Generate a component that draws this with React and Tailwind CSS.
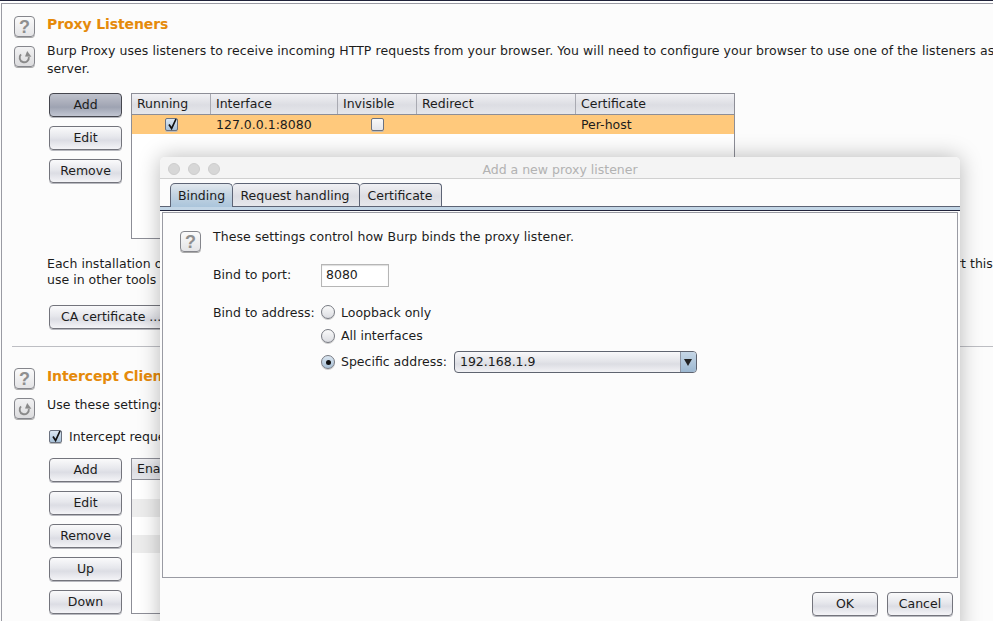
function Btn({ children, active, className = "" }) {
  return (
    <div
      className={
        "flex h-[24px] items-center justify-center rounded-[4px] border text-[12.5px] text-[#1c1c1c] shadow-[0_1px_0_#b8b9bf] " +
        (active
          ? "border-[#45464e] bg-[linear-gradient(#bfc2cc,#a4a8b6_50%,#9ea3b2_60%,#c2c6d2)] "
          : "border-[#73747c] bg-[linear-gradient(#fafafb,#e6e7ec_45%,#dcdde4_60%,#f4f4f7)] ") +
        className
      }
    >
      {children}
    </div>
  );
}

function Help() {
  return (
    <div className="flex h-[21px] w-[21px] shrink-0 items-center justify-center rounded-[4px] border border-[#85868c] bg-[linear-gradient(#fbfbfb,#e4e4e6)] font-['Liberation_Sans',sans-serif] text-[18px] leading-none font-bold text-[#8f8f8f] shadow-[0_1px_0_#aaa]">
      ?
    </div>
  );
}

function Refresh() {
  return (
    <div className="flex h-[21px] w-[21px] items-center justify-center rounded-[4px] border border-[#85868c] bg-[linear-gradient(#f2f2f3,#dcdcde)] shadow-[0_1px_0_#aaa]">
      <svg width="14" height="14" viewBox="0 0 14 14" fill="none" stroke="#8a8a8a" strokeWidth="1.9">
        <path d="M3 4.4 A4.6 4.6 0 1 0 10.8 7" />
        <path d="M7 6.6 L9.2 1 L13.4 6.8 Z" fill="#8a8a8a" stroke="none" />
      </svg>
    </div>
  );
}

function Check({ on }) {
  return (
    <div
      className={
        "relative h-[13px] w-[13px] shrink-0 rounded-[2px] border border-[#6b7280] shadow-[0_1px_0_#bbb] " +
        (on ? "bg-[linear-gradient(#dbe7f2,#a9c2d9)]" : "bg-[linear-gradient(#f8f8f8,#e4e5ea)]")
      }
    >
      {on && (
        <svg className="absolute -top-[2px] left-[1px]" width="11" height="14" viewBox="0 0 11 14" fill="none" stroke="#111" strokeWidth="1.7">
          <path d="M2 7.5 L4.6 11.5 L9 2" />
        </svg>
      )}
    </div>
  );
}

function Radio({ on }) {
  return (
    <div
      className={
        "flex h-[14px] w-[14px] shrink-0 items-center justify-center rounded-full border border-[#777a82] shadow-[0_1px_0_#ccc] " +
        (on ? "bg-[linear-gradient(#dbe6f0,#a8c0d6)]" : "bg-[linear-gradient(#fafafa,#dcdde2)]")
      }
    >
      {on && <div className="h-[5px] w-[5px] rounded-full bg-[#111]" />}
    </div>
  );
}

const columns = [
  ["Running", "w-[79px]"],
  ["Interface", "w-[127px]"],
  ["Invisible", "w-[79px]"],
  ["Redirect", "w-[159px]"],
  ["Certificate", "flex-1"],
];

const headBg = "bg-[linear-gradient(#f1f1f4,#dcdde3_55%,#e6e7eb)]";
const titleCls = "-mt-[1px] text-[14px] leading-[18px] font-bold tracking-[-0.1px] text-[#e58a0b]";

export default function App() {
  return (
    <div className="relative h-[621px] w-[993px] overflow-hidden bg-[#fcfcfc] font-['DejaVu_Sans',sans-serif] text-[12.5px] leading-[18px] text-[#1c1c1c]">
      <div className="h-[1px] bg-[#20233a]" />
      <div className="h-[2px] bg-white" />
      <div className="ml-[1px] h-[618px] border-t border-l border-[#9a9ba3] pl-[10px]">
        {/* Proxy Listeners */}
        <section className="flex h-[343px] flex-col border-b border-[#bdbec3] pl-[2px]">
          <div className="flex pt-[12px]">
            <div className="flex w-[33px] shrink-0 flex-col gap-[9px]">
              <Help />
              <Refresh />
            </div>
            <div className="min-w-0">
              <h2 className={titleCls}>Proxy Listeners</h2>
              <p className="mt-[9px] tracking-[0.065px] whitespace-nowrap">
                Burp Proxy uses listeners to receive incoming HTTP requests from your browser. You will need to configure your browser to use one of the listeners as
                <br />
                server.
              </p>
            </div>
          </div>
          <div className="mt-[15px] flex pl-[35px]">
            <div className="flex w-[82px] shrink-0 flex-col gap-[9px]">
              <Btn active className="w-[73px]">Add</Btn>
              <Btn className="w-[73px]">Edit</Btn>
              <Btn className="w-[73px]">Remove</Btn>
            </div>
            <div className="h-[146px] w-[604px] border border-[#8d8e97] bg-white">
              <div className={"flex h-[21px] border-b border-[#8d8e97] " + headBg}>
                {columns.map(([c, w]) => (
                  <div key={c} className={"flex h-full items-center border-r border-[#a9aab2] pl-[5px] last:border-r-0 " + w}>
                    {c}
                  </div>
                ))}
              </div>
              <div className="flex h-[19px] items-center bg-[#ffc97c]">
                <div className="flex w-[79px] justify-center"><Check on /></div>
                <div className="w-[127px] pl-[5px]">127.0.0.1:8080</div>
                <div className="flex w-[79px] justify-center"><Check /></div>
                <div className="w-[159px]" />
                <div className="pl-[5px]">Per-host</div>
              </div>
            </div>
          </div>
          <p className="mt-[17px] pl-[33px] leading-[16px] tracking-[0.02px] whitespace-nowrap">
            Each installation of Burp generates its own CA certificate that Proxy listeners can use when negotiating SSL connections. You can import or export this
            <br />
            use in other tools or another installation of Burp.
          </p>
          <Btn className="mt-[17px] ml-[35px] w-[120px] justify-start pl-[11px]">CA certificate ...</Btn>
        </section>

        {/* Intercept Client Requests */}
        <section className="flex flex-col pl-[2px]">
          <div className="flex pt-[21px]">
            <div className="flex w-[33px] shrink-0 flex-col gap-[9px]">
              <Help />
              <Refresh />
            </div>
            <div>
              <h2 className={titleCls}>Intercept Client Requests</h2>
              <p className="mt-[11px] tracking-[0.075px]">Use these settings to control which requests are stalled for viewing and editing in the Intercept tab.</p>
              <div className="mt-[13px] ml-[2px] flex items-center gap-[7px]">
                <Check on />
                <span className="pt-[1px]">Intercept requests based on the following rules:</span>
              </div>
            </div>
          </div>
          <div className="mt-[12px] flex pl-[35px]">
            <div className="flex w-[82px] shrink-0 flex-col gap-[9px]">
              {["Add", "Edit", "Remove", "Up", "Down"].map((b) => (
                <Btn key={b} className="w-[73px]">{b}</Btn>
              ))}
            </div>
            <div className="h-[156px] w-[300px] border border-[#8d8e97] bg-white">
              <div className={"flex h-[21px] items-center border-b border-[#8d8e97] pl-[5px] " + headBg}>Enabled</div>
              <div className="h-[19px]" />
              <div className="h-[18px] bg-[#ededed]" />
              <div className="h-[18px]" />
              <div className="h-[18px] bg-[#ededed]" />
            </div>
          </div>
        </section>
      </div>

      {/* Dialog window */}
      <div className="absolute top-[157px] left-[160px] flex h-[480px] w-[800px] flex-col rounded-t-[5px] bg-[#fcfcfc] shadow-[0_0_22px_rgba(0,0,0,0.28)]">
        <div className="relative flex h-[22px] shrink-0 items-center justify-center rounded-t-[5px] border-b border-[#d0d0d0] bg-[#f4f4f4] pt-[4px] text-[#b2b2b2]">
          <div className="absolute top-[6px] left-[8px] flex gap-[8px]">
            <div className="h-[12px] w-[12px] rounded-full border border-[#cdcdcd] bg-[#d7d7d7]" />
            <div className="h-[12px] w-[12px] rounded-full border border-[#cdcdcd] bg-[#d7d7d7]" />
            <div className="h-[12px] w-[12px] rounded-full border border-[#cdcdcd] bg-[#d7d7d7]" />
          </div>
          Add a new proxy listener
        </div>
        <div className="flex h-[27px] shrink-0 items-start pt-[4px] pl-[10px]">
          <div className="relative z-10 flex h-[24px] w-[63px] items-center justify-center rounded-t-[5px] border border-b-0 border-[#5d6475] bg-[linear-gradient(#e2e8ee,#c4d4e2_45%,#abc5db)] pt-[1px]">Binding</div>
          <div className={"flex h-[23px] w-[127px] items-center justify-center rounded-t-[4px] border border-b-0 border-l-0 border-[#5d6475] pt-[2px] pr-[2px] " + headBg}>Request handling</div>
          <div className={"flex h-[23px] w-[82px] items-center justify-center rounded-t-[4px] border border-b-0 border-l-0 border-[#5d6475] pt-[2px] pr-[1px] " + headBg}>Certificate</div>
        </div>
        <div className="h-[5px] shrink-0 border-y border-t-[#5d6475] border-b-[#20233a] bg-[#c3d6e6]" />
        <div className="mx-[2px] mt-[1px] h-[366px] shrink-0 border border-[#9a9ba3] bg-[#fcfcfc] pl-[17px]">
          <div className="flex items-start pt-[18px]">
            <Help />
            <span className="-mt-[3px] ml-[12px] tracking-[0.08px]">These settings control how Burp binds the proxy listener.</span>
          </div>
          <div className="mt-[11px] flex h-[24px] items-center pl-[33px]">
            <span className="w-[108px]">Bind to port:</span>
            <div className="flex h-[23px] w-[68px] items-center border border-[#b6b6b6] bg-white pl-[4px] shadow-[inset_0_1px_1px_#ddd]">8080</div>
          </div>
          <div className="mt-[13px] flex pl-[33px]">
            <span className="w-[108px] leading-[26px]">Bind to address:</span>
            <div className="flex flex-col">
              <div className="flex h-[24px] items-center gap-[6px]"><Radio /><span className="pt-[1px]">Loopback only</span></div>
              <div className="flex h-[23px] items-center gap-[6px]"><Radio /><span>All interfaces</span></div>
              <div className="flex h-[30px] items-center gap-[6px]">
                <Radio on /><span>Specific address:</span>
                <div className="ml-[1px] flex h-[22px] w-[243px] items-center justify-between rounded-[4px] border border-[#5f6470] bg-[linear-gradient(#f8f8fa,#e2e3e8_50%,#dcdde3_60%,#f2f2f5)] pl-[5px]">
                  192.168.1.9
                  <div className="flex h-full w-[16px] items-center justify-center rounded-r-[3px] border-l border-[#8e95a3] bg-[linear-gradient(#c5d6e6,#9db8d1)]">
                    <svg width="8" height="7" viewBox="0 0 8 7"><path d="M0 0H8L4 7Z" fill="#222" /></svg>
                  </div>
                </div>
              </div>
            </div>
          </div>
        </div>
        <div className="mt-[14px] flex justify-end gap-[9px] pr-[7px]">
          <Btn className="w-[66px]">OK</Btn>
          <Btn className="w-[66px]">Cancel</Btn>
        </div>
      </div>
    </div>
  );
}
